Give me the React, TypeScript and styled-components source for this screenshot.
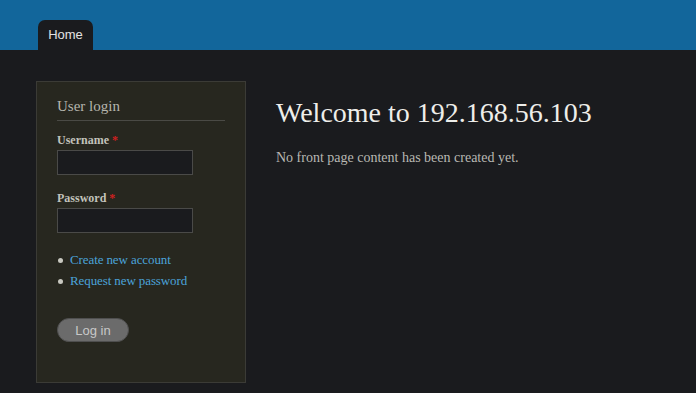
import styled, { createGlobalStyle } from "styled-components";

const GlobalStyle = createGlobalStyle`
  html, body {
    margin: 0;
    padding: 0;
    background-color: #1a1b1e;
  }
  body {
    font-family: "DejaVu Serif", "Liberation Serif", serif;
  }
`;

const App = () => {
  return (
    <Page>
      <GlobalStyle />
      <Header>
        <Tab>Home</Tab>
      </Header>
      <ContentWrapper>
        <Sidebar>
          <BlockTitle>User login</BlockTitle>
          <Field>
            <TextLabel htmlFor="username">
              Username <Required>*</Required>
            </TextLabel>
            <StyledInput id="username" />
          </Field>
          <Field>
            <TextLabel htmlFor="password">
              Password <Required>*</Required>
            </TextLabel>
            <StyledInput id="password" type="password" />
          </Field>
          <LinkList>
            <li>
              <StyledLink href="#">Create new account</StyledLink>
            </li>
            <li>
              <StyledLink href="#">Request new password</StyledLink>
            </li>
          </LinkList>
          <LoginButton>Log in</LoginButton>
        </Sidebar>
        <Main>
          <HeadText>Welcome to 192.168.56.103</HeadText>
          <Intro>No front page content has been created yet.</Intro>
        </Main>
      </ContentWrapper>
    </Page>
  );
};

const Page = styled.div`
  min-height: 100vh;
  background-color: #1a1b1e;
`;
const Header = styled.div`
  height: 50px;
  background-color: #12669b;
  display: flex;
  align-items: flex-end;
  padding-left: 38px;
`;
const Tab = styled.div`
  width: 55px;
  height: 30px;
  box-sizing: border-box;
  background-color: #1a1b1e;
  border-radius: 7px 7px 0 0;
  color: #e3e3e3;
  font-family: "Liberation Sans", Arial, sans-serif;
  font-size: 13px;
  display: flex;
  justify-content: center;
  padding-top: 7px;
`;
const ContentWrapper = styled.div`
  display: flex;
  align-items: flex-start;
  padding: 31px 0 0 36px;
  gap: 30px;
`;
const Sidebar = styled.div`
  width: 210px;
  height: 302px;
  box-sizing: border-box;
  background-color: #27271f;
  border: 1px solid #3b3b36;
  padding: 16px 20px 0 20px;
`;
const BlockTitle = styled.h2`
  margin: 0 0 12px 0;
  padding-bottom: 5px;
  border-bottom: 1px solid #4a4a45;
  font-family: "Liberation Serif", serif;
  font-weight: normal;
  font-size: 15px;
  color: #b5b5ad;
`;
const Field = styled.div`
  display: flex;
  flex-direction: column;
  margin-bottom: 16px;
`;
const TextLabel = styled.label`
  font-family: "Liberation Serif", serif;
  font-weight: bold;
  font-size: 12px;
  color: #c2c2bb;
  margin-bottom: 2px;
`;
const Required = styled.span`
  color: #d02020;
`;
const StyledInput = styled.input`
  width: 136px;
  height: 25px;
  box-sizing: border-box;
  background-color: #1a1b1e;
  border: 1px solid #4a4a48;
  color: #ddd;
  outline: none;
`;
const LinkList = styled.ul`
  margin: 10px 0 0 0;
  padding: 0;
  list-style: none;
  li {
    position: relative;
    padding-left: 13px;
    font-family: "Liberation Serif", serif;
    font-size: 13px;
    line-height: 21px;
    letter-spacing: -0.1px;
  }
  li::before {
    content: "";
    position: absolute;
    left: 1px;
    top: 9px;
    width: 5px;
    height: 5px;
    border-radius: 50%;
    background-color: #c8c8c0;
  }
`;
const StyledLink = styled.a`
  color: #4ba3d9;
  text-decoration: none;
`;
const LoginButton = styled.button`
  margin-top: 27px;
  width: 72px;
  height: 24px;
  border-radius: 12px;
  border: 1px solid #4f4f4f;
  background-color: #6b6b6b;
  color: #c8c8c8;
  font-family: "Liberation Sans", Arial, sans-serif;
  font-size: 13px;
  padding: 0;
`;
const Main = styled.div`
  padding-top: 16px;
`;
const HeadText = styled.h1`
  margin: 0;
  font-family: "Liberation Serif", serif;
  font-weight: normal;
  font-size: 28px;
  color: #eeeeea;
`;
const Intro = styled.p`
  margin: 21px 0 0 0;
  font-family: "Liberation Serif", serif;
  font-size: 14px;
  color: #b8b8b2;
`;

export default App;
